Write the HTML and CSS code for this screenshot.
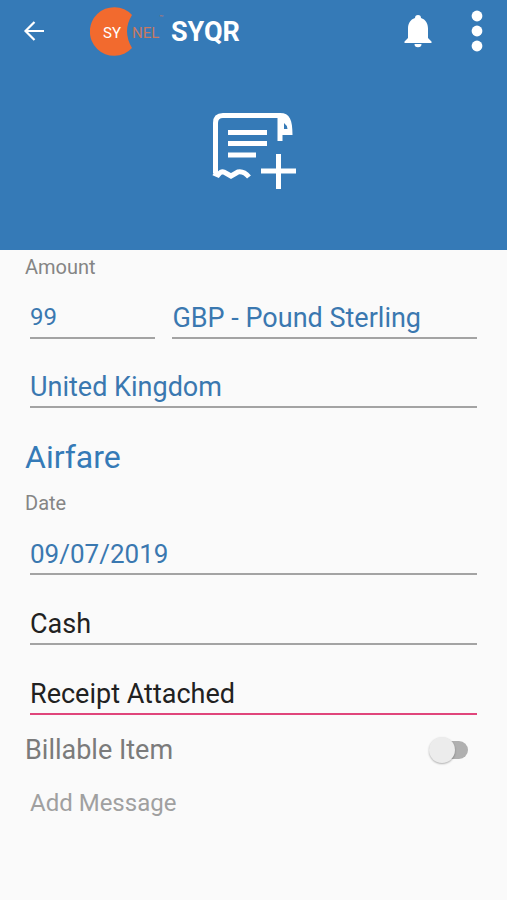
FILE: index.html
```
<!DOCTYPE html>
<html lang="en">
  <head>
    <meta charset="UTF-8" />
    <meta name="viewport" content="width=device-width, initial-scale=1.0" />
    <title>SYQR - Add Expense</title>
    <link rel="stylesheet" href="styles.css">
  </head>
  <body>
    <header>
      <div class="toolbar">
        <button type="button" class="icon-button" aria-label="Back">
          <svg width="22" height="22" viewBox="0 0 22 22" fill="none" stroke="#fff" stroke-width="2.2">
            <path d="M21 11H3M11.500 2L2.500 11l9 9" />
          </svg>
        </button>
        <div class="brand">
          <svg class="logo" width="76" height="50" viewBox="0 0 76 50" role="img" aria-label="Synel">
            <path d="M42 9A24.300 24.300 0 1 0 42 42Q32 25 42 9Z" fill="#f26a2e" />
            <text class="logo-text" x="13" y="32" fill="#fff">SY</text>
            <text class="logo-text" x="42" y="32" fill="#c87962">NEL</text>
            <text class="logo-mark" x="69" y="14" fill="#c87962">™</text>
          </svg>
          <h1 class="app-title">SYQR</h1>
        </div>
        <button type="button" class="icon-button bell-button" aria-label="Notifications">
          <svg width="28" height="34" viewBox="0 0 28 34" fill="#fff">
            <path d="M14 1c-2 0-3 1.200-3 3C6.300 5.500 4 9.500 4 14.500V24l-3.500 3.500V29h27v-1.500L24 24v-9.500C24 9.500 21.700 5.500 17 4c0-1.800-1-3-3-3ZM10.500 30a3.500 3.200 0 0 0 7 0Z" />
          </svg>
        </button>
        <button type="button" class="icon-button" aria-label="More options">
          <svg width="12" height="42" viewBox="0 0 12 42" fill="#fff">
            <circle cx="6" cy="6" r="5.400" />
            <circle cx="6" cy="21" r="5.400" />
            <circle cx="6" cy="36" r="5.400" />
          </svg>
        </button>
      </div>
      <button type="button" class="icon-button receipt-button" aria-label="Add receipt">
        <svg width="86" height="80" viewBox="0 0 86 80" fill="none" stroke="#fff" stroke-width="5">
          <path d="M69 30V7M70 4.500H12Q4.500 4.500 4.500 12V62" />
          <path d="M69 2C79 2 81.500 9 81.500 24H70V8ZM73 12V18H76.500Q76 14 73 12Z" fill="#fff" fill-rule="evenodd" stroke="none" />
          <path d="M2.500 62L7 64Q10 60 13 61L20 65L27 61Q33 60 38 66" />
          <path d="M17 21.500h39M17 32.500h39M17 44h28" />
          <path d="M50 60h35M67.500 43v35" />
        </svg>
      </button>
    </header>

    <main>
      <form class="expense-form">
        <label class="caption" for="amount">Amount</label>
        <div class="amount-row">
          <input class="field amount" id="amount" type="text" inputmode="decimal" value="99">
          <select class="field" aria-label="Currency">
            <option>GBP - Pound Sterling</option>
          </select>
        </div>
        <select class="field" aria-label="Country">
          <option>United Kingdom</option>
        </select>

        <h2 class="category">Airfare</h2>

        <label class="caption" for="date">Date</label>
        <input class="field date" id="date" type="text" value="09/07/2019">
        <select class="field dark" aria-label="Payment method">
          <option>Cash</option>
        </select>
        <select class="field dark active" aria-label="Receipt">
          <option>Receipt Attached</option>
        </select>

        <div class="billable-row">
          <label for="billable">Billable Item</label>
          <input class="switch" id="billable" type="checkbox" role="switch">
        </div>
        <input class="message" type="text" placeholder="Add Message" aria-label="Message">
      </form>
    </main>
  </body>
</html>
```
FILE: styles.css
```
* {
  margin: 0;
  padding: 0;
  box-sizing: border-box;
  font-family: Roboto, Arial, sans-serif;
}

body {
  background-color: #fafafa;
  min-height: 100vh;
}

header {
  background-color: #357ab7;
  padding-bottom: 59px;
}

.toolbar {
  display: flex;
  align-items: center;
  height: 62px;
  padding: 0 24px 0 23px;
}

.icon-button {
  display: block;
  background: none;
  border: none;
  cursor: pointer;
}

.icon-button svg {
  display: block;
}

.brand {
  display: flex;
  align-items: center;
  gap: 5px;
  margin: 0 auto 0 45px;
}

.logo-text {
  font-size: 15px;
}

.logo-mark {
  font-size: 7px;
}

.app-title {
  color: white;
  font-size: 27px;
  line-height: 32px;
  padding-top: 2px;
}

.bell-button {
  margin-right: 39px;
}

.receipt-button {
  margin: 49px auto 0;
}

/* Form */
.expense-form {
  display: flex;
  flex-direction: column;
  padding: 5px 30px 30px 25px;
}

.caption {
  color: #858585;
  font-size: 20px;
  line-height: 24px;
  margin-bottom: 19px;
}

.amount-row {
  display: grid;
  grid-template-columns: 7fr 17fr;
  gap: 17px;
  margin: 0 0 28px 5px;
}

.field {
  appearance: none;
  min-width: 0;
  height: 41px;
  margin-left: 5px;
  background: none;
  border: none;
  border-bottom: 2px solid #a3a3a3;
  border-radius: 0;
  outline: none;
  color: #3a78b0;
  font-size: 27px;
}

.amount-row .field {
  margin-left: 0;
}

.amount {
  padding-bottom: 2px;
  font-size: 24px;
}

.date {
  font-size: 26px;
}

.category {
  color: #357ab7;
  font-size: 32px;
  font-weight: normal;
  line-height: 36px;
  margin: 31px 0 16px;
}

.dark {
  color: #212121;
  margin-top: 29px;
}

.active {
  border-bottom-color: #e0457b;
}

.billable-row {
  display: flex;
  justify-content: space-between;
  align-items: center;
  margin: 17px 9px 0 0;
  color: #7b7b7b;
  font-size: 27px;
  line-height: 36px;
}

/* Switch */
.switch {
  appearance: none;
  display: flex;
  align-items: center;
  width: 36px;
  height: 18px;
  border-radius: 9px;
  background-color: #b0b0b0;
  cursor: pointer;
}

.switch::before {
  content: "";
  width: 26px;
  height: 26px;
  margin-left: -3px;
  flex-shrink: 0;
  border-radius: 50%;
  background-color: #ececec;
  box-shadow: 0 1px 2px rgba(0, 0, 0, 0.3);
}

.switch:checked {
  justify-content: flex-end;
  background-color: #8fb9de;
}

.message {
  height: 40px;
  margin: 15px 0 0 5px;
  background: none;
  border: none;
  outline: none;
  color: #212121;
  font-size: 24px;
}

.message::placeholder {
  color: #a0a0a0;
}
```
